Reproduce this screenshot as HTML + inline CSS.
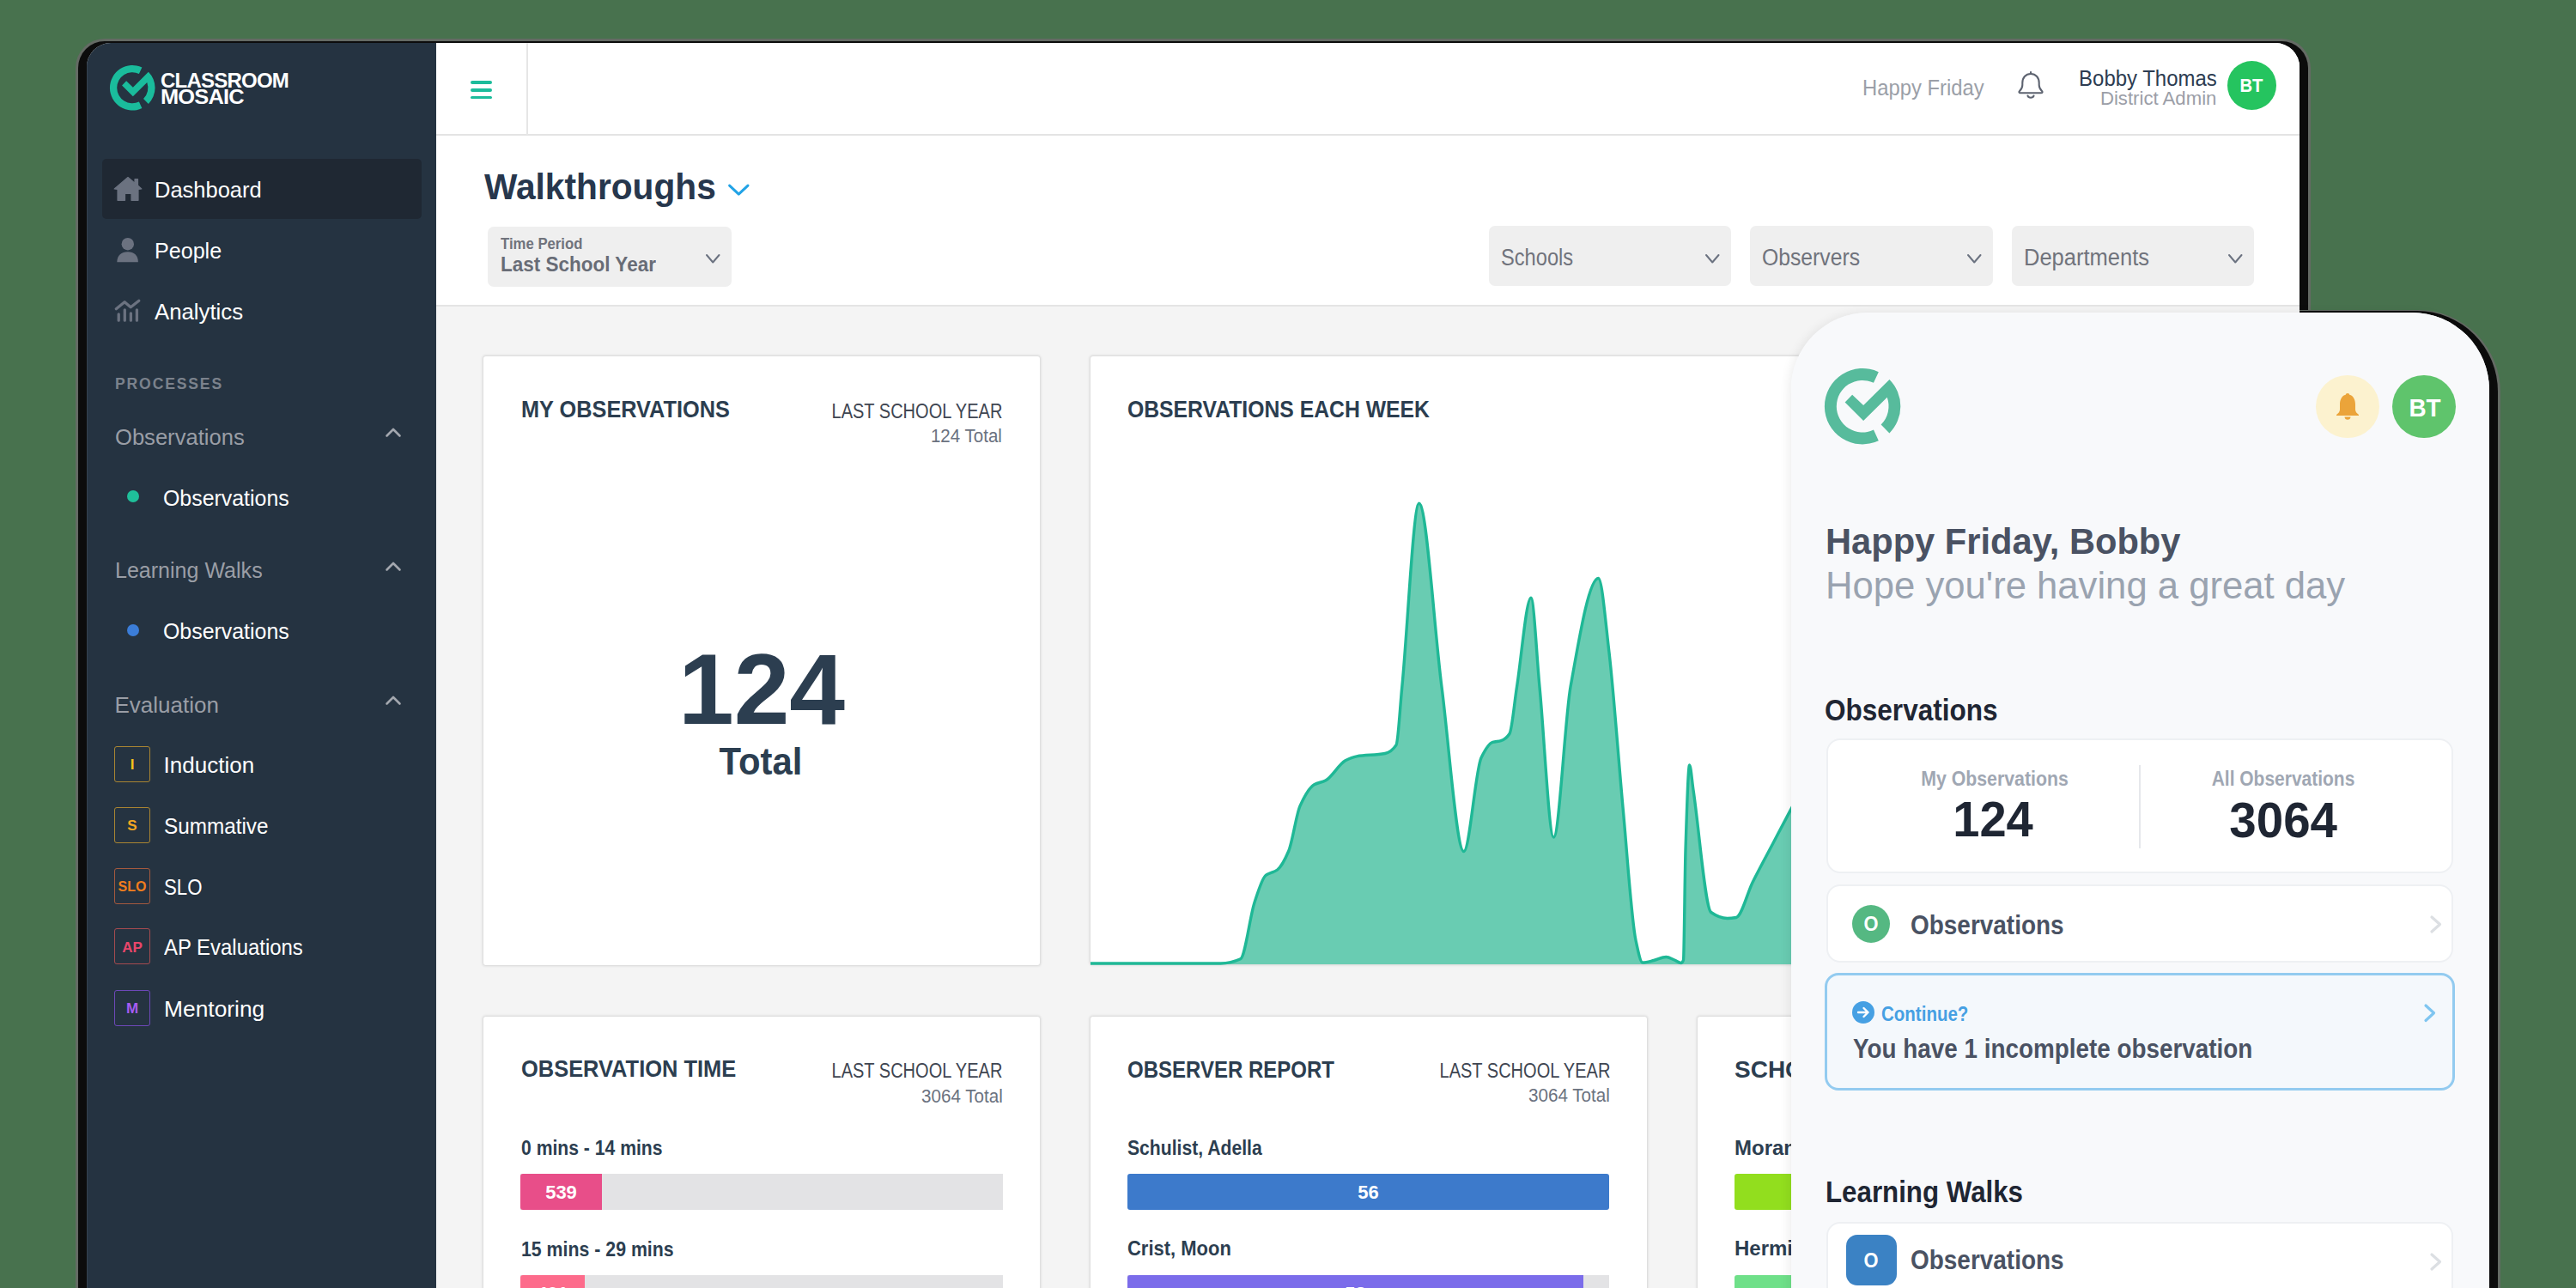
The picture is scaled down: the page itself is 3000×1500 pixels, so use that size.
<!DOCTYPE html>
<html><head><meta charset="utf-8"><style>
html,body{margin:0;padding:0;width:3000px;height:1500px;overflow:hidden;background:#48724e;}
body{position:relative;font-family:"Liberation Sans",sans-serif;}
body div{position:absolute;box-sizing:border-box;}
.t{white-space:nowrap;line-height:1;}
svg{position:absolute;overflow:visible;}
</style></head><body>
<div style="left:88px;top:45px;width:2603px;height:1500px;background:#646a64;border-radius:34px 34px 0 0;"></div>
<div style="left:91px;top:47.5px;width:2597px;height:1500px;background:#0c0c0c;border-radius:31px 31px 0 0;"></div>
<div style="left:2075px;top:360.5px;width:837px;height:1200px;background:#646a64;border-radius:96px 96px 0 0;"></div>
<div style="left:2075px;top:362px;width:833.5px;height:1200px;background:#0c0c0c;border-radius:94px 94px 0 0;"></div>
<div style="left:0;top:0;width:3000px;height:1500px;clip-path:inset(50px 322px 0px 101px round 28px 28px 0 0);background:#f4f4f4;">
<div style="left:101px;top:50px;width:407px;height:1450px;background:#253341;"></div>
<div style="left:101px;top:50px;width:1px;height:1450px;background:#35424f;"></div>
<div style="left:508px;top:50px;width:2170px;height:107px;background:#fff;"></div>
<div style="left:508px;top:156px;width:2170px;height:1.5px;background:#e4e4e4;"></div>
<div style="left:613px;top:50px;width:1.5px;height:107px;background:#e6e6e6;"></div>
<div style="left:508px;top:157.5px;width:2170px;height:198px;background:#fff;"></div>
<div style="left:508px;top:355px;width:2170px;height:1.5px;background:#e4e4e4;"></div>
<svg style="left:127.7px;top:76.2px" width="52.6" height="52.6" viewBox="-477 -477 954 954"><g fill="#1abc9c"><path d="M201,-432 A477,477 0 1 0 201,432 L138,296 A327,327 0 1 1 138,-296 Z"/><path d="M337,-337 A477,477 0 0 1 337,337 L231,231 A327,327 0 0 0 308,-112 L10,181 L-222,-52 L-130,-144 L10,-12 Z"/></g></svg>
<div id="t1" class="t" style="left:186.5px;top:81.6px;font-size:24.5px;font-weight:700;color:#ffffff;transform:scaleX(0.9801);transform-origin:left 0;letter-spacing:-0.8px;">CLASSROOM</div>
<div id="t2" class="t" style="left:186.5px;top:101.4px;font-size:24.5px;font-weight:700;color:#ffffff;transform:scaleX(1.0370);transform-origin:left 0;letter-spacing:-0.8px;">MOSAIC</div>
<div style="left:119px;top:184.6px;width:372px;height:70.8px;background:#1f2833;border-radius:5px;"></div>
<svg style="left:132px;top:205px" width="34" height="30" viewBox="0 0 34 30"><path fill="#6b7280" stroke="#6b7280" stroke-width="1.2" stroke-linejoin="round" d="M17,1.5 L25,8.2 L25,3.5 L28.5,3.5 L28.5,11 L32.8,15 L29,15.5 L29,28.3 L21,28.3 L21,20.5 L13.5,20.5 L13.5,28.3 L5,28.3 L5,15.5 L1.2,15 Z"/></svg>
<svg style="left:136px;top:276.5px" width="25" height="29" viewBox="0 0 25 29"><circle fill="#6b7280" cx="12.8" cy="7.2" r="7.2"/><path fill="#6b7280" d="M0.3,28.3 C0.3,20.5 5.5,16.3 12.8,16.3 C20,16.3 24.9,20.5 24.9,28.3 Z"/></svg>
<svg style="left:130px;top:345px" width="40" height="35" viewBox="130 345 40 35"><g fill="none" stroke="#6b7280" stroke-width="3.3" stroke-linecap="round" stroke-linejoin="round"><path d="M135.3,359.7 L145.1,351.8 L152.2,357.8 L161.8,350.3"/><path d="M138.2,365.8 V373.2 M145.3,360.8 V373.2 M152.4,364.8 V373.2 M159.4,360.8 V373.2"/></g></svg>
<div id="t3" class="t" style="left:179.7px;top:208.8px;font-size:25px;font-weight:400;color:#ffffff;transform:scaleX(1.0193);transform-origin:left 0;">Dashboard</div>
<div id="t4" class="t" style="left:179.7px;top:280.2px;font-size:25px;font-weight:400;color:#ffffff;transform:scaleX(1.0040);transform-origin:left 0;">People</div>
<div id="t5" class="t" style="left:179.7px;top:350.9px;font-size:25px;font-weight:400;color:#ffffff;transform:scaleX(1.0303);transform-origin:left 0;">Analytics</div>
<div id="t6" class="t" style="left:133.5px;top:436.8px;font-size:19px;font-weight:700;color:#7b828c;transform:scaleX(0.9248);transform-origin:left 0;letter-spacing:2px;">PROCESSES</div>
<div id="t7" class="t" style="left:133.5px;top:495.9px;font-size:26px;font-weight:400;color:#9a9ea6;transform:scaleX(0.9836);transform-origin:left 0;">Observations</div>
<svg style="left:449px;top:498px" width="18" height="11" viewBox="0 0 18 11"><path d="M1.5,9.5 L9,2 L16.5,9.5" fill="none" stroke="#a3a7ae" stroke-width="2.6" stroke-linecap="round" stroke-linejoin="round"/></svg>
<div style="left:147.5px;top:571.3px;width:14px;height:14px;border-radius:50%;background:#1fbf9a"></div>
<div id="t8" class="t" style="left:190px;top:566.5px;font-size:26px;font-weight:400;color:#ffffff;transform:scaleX(0.9579);transform-origin:left 0;">Observations</div>
<div id="t9" class="t" style="left:133.5px;top:651.0px;font-size:26px;font-weight:400;color:#9a9ea6;transform:scaleX(0.9631);transform-origin:left 0;">Learning Walks</div>
<svg style="left:449px;top:653.5px" width="18" height="11" viewBox="0 0 18 11"><path d="M1.5,9.5 L9,2 L16.5,9.5" fill="none" stroke="#a3a7ae" stroke-width="2.6" stroke-linecap="round" stroke-linejoin="round"/></svg>
<div style="left:147.5px;top:727px;width:14px;height:14px;border-radius:50%;background:#3b7dd8"></div>
<div id="t10" class="t" style="left:190px;top:721.5px;font-size:26px;font-weight:400;color:#ffffff;transform:scaleX(0.9579);transform-origin:left 0;">Observations</div>
<div id="t11" class="t" style="left:133.5px;top:808.1px;font-size:26px;font-weight:400;color:#9a9ea6;">Evaluation</div>
<svg style="left:449px;top:809.5px" width="18" height="11" viewBox="0 0 18 11"><path d="M1.5,9.5 L9,2 L16.5,9.5" fill="none" stroke="#a3a7ae" stroke-width="2.6" stroke-linecap="round" stroke-linejoin="round"/></svg>
<div style="left:133px;top:869px;width:42px;height:42px;border:1.6px solid #a98532;border-radius:3px;"></div>
<div id="t12" class="t" style="left:-846px;width:2000px;text-align:center;top:882.3px;font-size:17px;font-weight:700;color:#f3c21b;">I</div>
<div id="t13" class="t" style="left:190.6px;top:878.1px;font-size:26px;font-weight:400;color:#ffffff;">Induction</div>
<div style="left:133px;top:939.6px;width:42px;height:42px;border:1.6px solid #a98532;border-radius:3px;"></div>
<div id="t14" class="t" style="left:-846px;width:2000px;text-align:center;top:952.9px;font-size:17px;font-weight:700;color:#f5a623;">S</div>
<div id="t15" class="t" style="left:190.6px;top:948.9px;font-size:26px;font-weight:400;color:#ffffff;transform:scaleX(0.9344);transform-origin:left 0;">Summative</div>
<div style="left:133px;top:1010.7px;width:42px;height:42px;border:1.6px solid #a5593e;border-radius:3px;"></div>
<div id="t16" class="t" style="left:-846px;width:2000px;text-align:center;top:1024.5px;font-size:16px;font-weight:700;color:#f07d1e;">SLO</div>
<div id="t17" class="t" style="left:190.6px;top:1020.0px;font-size:26px;font-weight:400;color:#ffffff;transform:scaleX(0.8540);transform-origin:left 0;">SLO</div>
<div style="left:133px;top:1081.4px;width:42px;height:42px;border:1.6px solid #a54b4f;border-radius:3px;"></div>
<div id="t18" class="t" style="left:-846px;width:2000px;text-align:center;top:1094.7px;font-size:17px;font-weight:700;color:#e9466a;">AP</div>
<div id="t19" class="t" style="left:190.6px;top:1090.0px;font-size:26px;font-weight:400;color:#ffffff;transform:scaleX(0.9200);transform-origin:left 0;">AP Evaluations</div>
<div style="left:133px;top:1152.5px;width:42px;height:42px;border:1.6px solid #6d48b8;border-radius:3px;"></div>
<div id="t20" class="t" style="left:-846px;width:2000px;text-align:center;top:1165.8px;font-size:17px;font-weight:700;color:#a65cf2;">M</div>
<div id="t21" class="t" style="left:190.6px;top:1161.8px;font-size:26px;font-weight:400;color:#ffffff;transform:scaleX(1.0143);transform-origin:left 0;">Mentoring</div>
<div style="left:548px;top:94px;width:25px;height:3.8px;background:#1cbc9b;border-radius:2px;"></div>
<div style="left:548px;top:102.9px;width:25px;height:3.8px;background:#1cbc9b;border-radius:2px;"></div>
<div style="left:548px;top:111.7px;width:25px;height:3.8px;background:#1cbc9b;border-radius:2px;"></div>
<div id="t22" class="t" style="right:689.4px;top:89.5px;font-size:25px;font-weight:400;color:#9b9fa8;transform:scaleX(0.9524);transform-origin:right 0;">Happy Friday</div>
<svg style="left:2340px;top:75px" width="50" height="50" viewBox="2340 75 50 50"><g fill="none" stroke="#5d6370" stroke-width="2.1" stroke-linejoin="round" stroke-linecap="round"><path d="M2365,86 C2359,86 2355.3,90.5 2355.3,96.5 L2355.3,99 C2355.3,102 2354,104 2352,106 C2350.8,107.2 2351.5,108.3 2353,108.3 L2377,108.3 C2378.5,108.3 2379.2,107.2 2378,106 C2376,104 2374.7,102 2374.7,99 L2374.7,96.5 C2374.7,90.5 2371,86 2365,86 Z"/><path d="M2365,84 V86"/><path d="M2361.5,111.6 C2362.5,114.4 2367.5,114.4 2368.5,111.6"/></g></svg>
<div id="t23" class="t" style="right:418.1px;top:79.3px;font-size:25px;font-weight:400;color:#2d3c51;transform:scaleX(0.9576);transform-origin:right 0;">Bobby Thomas</div>
<div id="t24" class="t" style="right:418.1px;top:105.3px;font-size:21.5px;font-weight:400;color:#9b9ea7;transform:scaleX(1.0310);transform-origin:right 0;">District Admin</div>
<div style="left:2593.5px;top:71px;width:57px;height:57px;border-radius:50%;background:#25c45f"></div>
<div id="t25" class="t" style="left:1622.3000000000002px;width:2000px;text-align:center;top:89.1px;font-size:22.5px;font-weight:700;color:#ffffff;transform:scaleX(0.9);">BT</div>
<div id="t26" class="t" style="left:564px;top:196.2px;font-size:43px;font-weight:700;color:#27374d;transform:scaleX(0.9465);transform-origin:left 0;">Walkthroughs</div>
<svg style="left:840px;top:205px" width="40" height="30" viewBox="840 205 40 30"><path d="M849.6,216.1 L860.3,226.2 L871,216.1" fill="none" stroke="#22a3e6" stroke-width="3" stroke-linecap="round" stroke-linejoin="round"/></svg>
<div style="left:568.4px;top:263.6px;width:283.3px;height:70px;background:#efefef;border-radius:7px;"></div>
<div id="t27" class="t" style="left:583px;top:275.7px;font-size:17.5px;font-weight:700;color:#70737c;transform:scaleX(0.9556);transform-origin:left 0;">Time Period</div>
<div id="t28" class="t" style="left:583px;top:296.2px;font-size:24px;font-weight:700;color:#686c76;transform:scaleX(0.9375);transform-origin:left 0;">Last School Year</div>
<svg style="left:820.8px;top:294.5px" width="18.5" height="12.5" viewBox="-2 -2 18.5 12.5"><path d="M0,0 L7.25,8.5 L14.5,0" fill="none" stroke="#6b7280" stroke-width="2" stroke-linecap="round" stroke-linejoin="round"/></svg>
<div style="left:1733.8px;top:263.3px;width:282.60000000000014px;height:70px;background:#efefef;border-radius:7px;"></div>
<div id="t29" class="t" style="left:1747.7px;top:286.8px;font-size:27px;font-weight:400;color:#70737c;transform:scaleX(0.8755);transform-origin:left 0;">Schools</div>
<svg style="left:1985.2px;top:294.5px" width="18.5" height="12.5" viewBox="-2 -2 18.5 12.5"><path d="M0,0 L7.25,8.5 L14.5,0" fill="none" stroke="#6b7280" stroke-width="2" stroke-linecap="round" stroke-linejoin="round"/></svg>
<div style="left:2037.7px;top:263.3px;width:283.29999999999995px;height:70px;background:#efefef;border-radius:7px;"></div>
<div id="t30" class="t" style="left:2052px;top:286.8px;font-size:27px;font-weight:400;color:#70737c;transform:scaleX(0.9154);transform-origin:left 0;">Observers</div>
<svg style="left:2289.8px;top:294.5px" width="18.5" height="12.5" viewBox="-2 -2 18.5 12.5"><path d="M0,0 L7.25,8.5 L14.5,0" fill="none" stroke="#6b7280" stroke-width="2" stroke-linecap="round" stroke-linejoin="round"/></svg>
<div style="left:2342.5px;top:263.3px;width:282.5px;height:70px;background:#efefef;border-radius:7px;"></div>
<div id="t31" class="t" style="left:2356.8px;top:286.8px;font-size:27px;font-weight:400;color:#70737c;transform:scaleX(0.9447);transform-origin:left 0;">Departments</div>
<svg style="left:2593.8px;top:294.5px" width="18.5" height="12.5" viewBox="-2 -2 18.5 12.5"><path d="M0,0 L7.25,8.5 L14.5,0" fill="none" stroke="#6b7280" stroke-width="2" stroke-linecap="round" stroke-linejoin="round"/></svg>
<div style="left:563px;top:415px;width:648px;height:709px;background:#fff;border-radius:3px;box-shadow:0 0 3px 0.5px rgba(0,0,0,0.13);"></div>
<div style="left:1270px;top:415px;width:1355px;height:708px;background:#fff;border-radius:3px;box-shadow:0 0 3px 0.5px rgba(0,0,0,0.13);"></div>
<div style="left:563px;top:1184px;width:648px;height:400px;background:#fff;border-radius:3px;box-shadow:0 0 3px 0.5px rgba(0,0,0,0.13);"></div>
<div style="left:1270px;top:1183.5px;width:648px;height:400px;background:#fff;border-radius:3px;box-shadow:0 0 3px 0.5px rgba(0,0,0,0.13);"></div>
<div style="left:1977px;top:1183.5px;width:648px;height:400px;background:#fff;border-radius:3px;box-shadow:0 0 3px 0.5px rgba(0,0,0,0.13);"></div>
<div id="t32" class="t" style="left:606.6px;top:463.2px;font-size:28px;font-weight:700;color:#2c3e50;transform:scaleX(0.9041);transform-origin:left 0;">MY OBSERVATIONS</div>
<div id="t33" class="t" style="right:1832.8px;top:467.6px;font-size:23.5px;font-weight:400;color:#3f4652;transform:scaleX(0.8522);transform-origin:right 0;">LAST SCHOOL YEAR</div>
<div id="t34" class="t" style="right:1832.8px;top:498.3px;font-size:21.5px;font-weight:400;color:#6b7280;transform:scaleX(0.9553);transform-origin:right 0;">124 Total</div>
<div id="t35" class="t" style="left:-113px;width:2000px;text-align:center;top:744.4px;font-size:117px;font-weight:700;color:#2c3e50;transform:scaleX(0.9947);transform-origin:center 0;">124</div>
<div id="t36" class="t" style="left:-114px;width:2000px;text-align:center;top:864.2px;font-size:45px;font-weight:700;color:#2c3e50;transform:scaleX(0.9307);transform-origin:center 0;">Total</div>
<div id="t37" class="t" style="left:1312.7px;top:462.6px;font-size:28px;font-weight:700;color:#2c3e50;transform:scaleX(0.8836);transform-origin:left 0;">OBSERVATIONS EACH WEEK</div>
<svg style="left:0;top:0" width="3000" height="1500"><path d="M1270,1122 C1320.5,1122.0 1371.1,1122.0 1421.6,1122 C1429.3,1122.0 1437.0,1120.3 1444.7,1116.8 C1450.1,1114.4 1455.6,1067.3 1461,1051 C1465.3,1038.0 1469.7,1023.0 1474,1019.5 C1478.5,1015.9 1483.1,1016.4 1487.6,1013 C1492.0,1009.7 1496.4,1001.3 1500.8,991 C1505.2,980.7 1509.6,948.4 1514,938.6 C1519.5,926.4 1525.0,916.9 1530.5,913.8 C1534.9,911.3 1539.3,911.3 1543.7,909 C1551.4,905.1 1559.1,889.9 1566.8,885.8 C1571.2,883.5 1575.6,881.6 1580,880.8 C1591.0,878.9 1602.0,879.7 1613,877.5 C1617.3,876.6 1621.7,874.4 1626,867.7 C1628.3,864.2 1630.5,823.3 1632.8,800 C1639.4,732.1 1646.0,586.3 1652.6,586.3 C1661.4,586.3 1670.2,731.9 1679,800 C1687.6,866.6 1696.2,991.5 1704.8,991.5 C1711.5,991.5 1718.3,896.5 1725,882.5 C1729.5,873.2 1733.9,865.7 1738.4,864.4 C1741.6,863.4 1744.8,863.6 1748,862.7 C1751.3,861.7 1754.7,859.5 1758,854.5 C1760.8,850.3 1763.7,818.0 1766.5,800 C1772.0,765.0 1777.5,696.2 1783,696.2 C1786.3,696.2 1789.7,765.0 1793,800 C1798.5,857.5 1803.9,975.0 1809.4,975 C1815.9,975.0 1822.5,836.6 1829,800 C1839.8,739.3 1850.7,673.5 1861.5,673.5 C1865.7,673.5 1869.8,724.6 1874,760 C1879.3,805.3 1884.7,882.6 1890,940 C1895.0,993.8 1900.0,1071.5 1905,1095 C1907.7,1107.5 1910.3,1121.0 1913,1121 C1917.3,1121.0 1921.7,1119.5 1926,1118.5 C1930.8,1117.4 1935.5,1114.5 1940.3,1114.5 C1943.5,1114.5 1946.8,1116.7 1950,1118 C1952.7,1119.1 1955.3,1121.5 1958,1121.5 C1958.8,1121.5 1959.7,1120.3 1960.5,1118 C1961.3,1115.7 1962.2,1016.3 1963,990 C1964.5,941.6 1966.1,891.0 1967.6,891 C1969.1,891.0 1970.5,910.2 1972,920 C1978.9,966.2 1985.8,1057.7 1992.7,1062.5 C1999.0,1066.9 2005.3,1069.5 2011.6,1069.5 C2015.1,1069.5 2018.5,1069.1 2022,1068.5 C2028.3,1067.4 2034.7,1040.5 2041,1027.7 C2048.7,1012.2 2056.3,998.3 2064,983.7 C2071.0,970.4 2078.0,956.9 2085,943.9 C2096.7,922.2 2108.3,901.3 2120,880 L2120,1123 L1270,1123 Z" fill="#69ccb2"/><path d="M1270,1122 C1320.5,1122.0 1371.1,1122.0 1421.6,1122 C1429.3,1122.0 1437.0,1120.3 1444.7,1116.8 C1450.1,1114.4 1455.6,1067.3 1461,1051 C1465.3,1038.0 1469.7,1023.0 1474,1019.5 C1478.5,1015.9 1483.1,1016.4 1487.6,1013 C1492.0,1009.7 1496.4,1001.3 1500.8,991 C1505.2,980.7 1509.6,948.4 1514,938.6 C1519.5,926.4 1525.0,916.9 1530.5,913.8 C1534.9,911.3 1539.3,911.3 1543.7,909 C1551.4,905.1 1559.1,889.9 1566.8,885.8 C1571.2,883.5 1575.6,881.6 1580,880.8 C1591.0,878.9 1602.0,879.7 1613,877.5 C1617.3,876.6 1621.7,874.4 1626,867.7 C1628.3,864.2 1630.5,823.3 1632.8,800 C1639.4,732.1 1646.0,586.3 1652.6,586.3 C1661.4,586.3 1670.2,731.9 1679,800 C1687.6,866.6 1696.2,991.5 1704.8,991.5 C1711.5,991.5 1718.3,896.5 1725,882.5 C1729.5,873.2 1733.9,865.7 1738.4,864.4 C1741.6,863.4 1744.8,863.6 1748,862.7 C1751.3,861.7 1754.7,859.5 1758,854.5 C1760.8,850.3 1763.7,818.0 1766.5,800 C1772.0,765.0 1777.5,696.2 1783,696.2 C1786.3,696.2 1789.7,765.0 1793,800 C1798.5,857.5 1803.9,975.0 1809.4,975 C1815.9,975.0 1822.5,836.6 1829,800 C1839.8,739.3 1850.7,673.5 1861.5,673.5 C1865.7,673.5 1869.8,724.6 1874,760 C1879.3,805.3 1884.7,882.6 1890,940 C1895.0,993.8 1900.0,1071.5 1905,1095 C1907.7,1107.5 1910.3,1121.0 1913,1121 C1917.3,1121.0 1921.7,1119.5 1926,1118.5 C1930.8,1117.4 1935.5,1114.5 1940.3,1114.5 C1943.5,1114.5 1946.8,1116.7 1950,1118 C1952.7,1119.1 1955.3,1121.5 1958,1121.5 C1958.8,1121.5 1959.7,1120.3 1960.5,1118 C1961.3,1115.7 1962.2,1016.3 1963,990 C1964.5,941.6 1966.1,891.0 1967.6,891 C1969.1,891.0 1970.5,910.2 1972,920 C1978.9,966.2 1985.8,1057.7 1992.7,1062.5 C1999.0,1066.9 2005.3,1069.5 2011.6,1069.5 C2015.1,1069.5 2018.5,1069.1 2022,1068.5 C2028.3,1067.4 2034.7,1040.5 2041,1027.7 C2048.7,1012.2 2056.3,998.3 2064,983.7 C2071.0,970.4 2078.0,956.9 2085,943.9 C2096.7,922.2 2108.3,901.3 2120,880" fill="none" stroke="#1fb896" stroke-width="3.4"/></svg>
<div id="t38" class="t" style="left:606.6px;top:1230.8px;font-size:28px;font-weight:700;color:#2c3e50;transform:scaleX(0.9088);transform-origin:left 0;">OBSERVATION TIME</div>
<div id="t39" class="t" style="right:1832.8px;top:1236.0px;font-size:23.5px;font-weight:400;color:#3f4652;transform:scaleX(0.8522);transform-origin:right 0;">LAST SCHOOL YEAR</div>
<div id="t40" class="t" style="right:1831.8px;top:1266.8px;font-size:21.5px;font-weight:400;color:#6b7280;transform:scaleX(0.9588);transform-origin:right 0;">3064 Total</div>
<div id="t41" class="t" style="left:606.6px;top:1325.2px;font-size:24px;font-weight:700;color:#2c3e50;transform:scaleX(0.8811);transform-origin:left 0;">0 mins - 14 mins</div>
<div style="left:606px;top:1367.4px;width:562px;height:41.6px;background:#e3e3e5;"></div>
<div style="left:606px;top:1367.4px;width:95px;height:41.6px;background:#e84e89;border-radius:3px 0 0 3px;"></div>
<div id="t42" class="t" style="left:-346.5px;width:2000px;text-align:center;top:1377.9px;font-size:22px;font-weight:700;color:#ffffff;">539</div>
<div id="t43" class="t" style="left:606.6px;top:1443.2px;font-size:24px;font-weight:700;color:#2c3e50;transform:scaleX(0.8879);transform-origin:left 0;">15 mins - 29 mins</div>
<div style="left:606px;top:1485px;width:562px;height:41.6px;background:#e3e3e5;"></div>
<div style="left:606px;top:1485px;width:75px;height:41.6px;background:#fd6b8b;border-radius:3px 0 0 3px;"></div>
<div id="t44" class="t" style="left:-356.5px;width:2000px;text-align:center;top:1495.9px;font-size:22px;font-weight:700;color:#ffffff;">401</div>
<div id="t45" class="t" style="left:1312.7px;top:1231.8px;font-size:28px;font-weight:700;color:#2c3e50;transform:scaleX(0.8571);transform-origin:left 0;">OBSERVER REPORT</div>
<div id="t46" class="t" style="right:1125.1px;top:1236.2px;font-size:23.5px;font-weight:400;color:#3f4652;transform:scaleX(0.8522);transform-origin:right 0;">LAST SCHOOL YEAR</div>
<div id="t47" class="t" style="right:1124.8px;top:1266.0px;font-size:21.5px;font-weight:400;color:#6b7280;transform:scaleX(0.9588);transform-origin:right 0;">3064 Total</div>
<div id="t48" class="t" style="left:1313px;top:1325.2px;font-size:24px;font-weight:700;color:#2c3e50;transform:scaleX(0.8814);transform-origin:left 0;">Schulist, Adella</div>
<div style="left:1313px;top:1367px;width:561px;height:42px;background:#3d7acb;border-radius:3px;"></div>
<div id="t49" class="t" style="left:593.5px;width:2000px;text-align:center;top:1377.9px;font-size:22px;font-weight:700;color:#ffffff;">56</div>
<div id="t50" class="t" style="left:1313px;top:1442.2px;font-size:24px;font-weight:700;color:#2c3e50;transform:scaleX(0.9154);transform-origin:left 0;">Crist, Moon</div>
<div style="left:1313px;top:1485px;width:561px;height:42px;background:#e3e3e5;"></div>
<div style="left:1313px;top:1485px;width:531px;height:42px;background:#7b6cea;border-radius:3px 0 0 3px;"></div>
<div id="t51" class="t" style="left:578.5px;width:2000px;text-align:center;top:1495.9px;font-size:22px;font-weight:700;color:#ffffff;">53</div>
<div id="t52" class="t" style="left:2020px;top:1231.8px;font-size:28px;font-weight:700;color:#2c3e50;">SCHOOLS REPORT</div>
<div id="t53" class="t" style="left:2020px;top:1325.2px;font-size:24px;font-weight:700;color:#2c3e50;">Moran, Lee</div>
<div style="left:2020px;top:1366.5px;width:561px;height:42.5px;background:#92de1e;border-radius:3px;"></div>
<div id="t54" class="t" style="left:2020px;top:1442.2px;font-size:24px;font-weight:700;color:#2c3e50;">Hermiston</div>
<div style="left:2020px;top:1485px;width:561px;height:42px;background:#6fe089;border-radius:3px;"></div>
</div>
<div style="left:2085.5px;top:364px;width:813.5px;height:1200px;border-radius:90px 90px 0 0;box-shadow:-3px 0 12px rgba(0,0,0,0.07);background:#f8f9fb;"></div>
<div style="left:0;top:0;width:3000px;height:1500px;clip-path:inset(364px 101px 0px 2085.5px round 90px 90px 0 0);">
<div style="left:2085.5px;top:364px;width:813.5px;height:1200px;background:#f8f9fb;"></div>
<svg style="left:2124.6000000000004px;top:429.3px" width="88.4" height="88.4" viewBox="-477 -477 954 954"><g fill="#57bb9c"><path d="M201,-432 A477,477 0 1 0 201,432 L138,296 A327,327 0 1 1 138,-296 Z"/><path d="M337,-337 A477,477 0 0 1 337,337 L231,231 A327,327 0 0 0 308,-112 L10,181 L-222,-52 L-130,-144 L10,-12 Z"/></g></svg>
<div style="left:2697.2px;top:436.7px;width:73.6px;height:73.6px;border-radius:50%;background:#fcf2cf"></div>
<svg style="left:2720px;top:458px" width="28" height="31" viewBox="0 0 28 31"><g fill="#eba43a"><circle cx="14" cy="2.3" r="2.3"/><path d="M14,1.5 C7,1.5 5,8 5,13 L5,19 C5,21.5 3,23.5 1,25 L1,26 L27,26 L27,25 C25,23.5 23,21.5 23,19 L23,13 C23,8 21,1.5 14,1.5 Z"/><path d="M10.5,27.5 L17.5,27.5 C17.5,29.5 16,30.8 14,30.8 C12,30.8 10.5,29.5 10.5,27.5 Z"/></g></svg>
<div style="left:2786px;top:436.7px;width:73.6px;height:73.6px;border-radius:50%;background:#5fc46c"></div>
<div id="t55" class="t" style="left:1823.5px;width:2000px;text-align:center;top:459.9px;font-size:30px;font-weight:700;color:#ffffff;transform:scaleX(0.93);">BT</div>
<div id="t56" class="t" style="left:2126px;top:609.1px;font-size:43px;font-weight:700;color:#4a5263;transform:scaleX(0.9686);transform-origin:left 0;">Happy Friday, Bobby</div>
<div id="t57" class="t" style="left:2126px;top:660.2px;font-size:44px;font-weight:400;color:#9aa3b0;transform:scaleX(0.9918);transform-origin:left 0;">Hope you're having a great day</div>
<div id="t58" class="t" style="left:2124.5px;top:808.9px;font-size:35px;font-weight:700;color:#1f2633;transform:scaleX(0.9009);transform-origin:left 0;">Observations</div>
<div style="left:2127px;top:859.6px;width:730px;height:157.2px;background:#fff;border:2px solid #eef0f3;border-radius:16px;"></div>
<div style="left:2490.8px;top:890.6px;width:2.2px;height:97px;background:#e6e8eb;"></div>
<div id="t59" class="t" style="left:1323px;width:2000px;text-align:center;top:894.9px;font-size:24px;font-weight:700;color:#a0a7b3;transform:scaleX(0.8880);transform-origin:center 0;">My Observations</div>
<div id="t60" class="t" style="left:1321.1999999999998px;width:2000px;text-align:center;top:926.6px;font-size:56.5px;font-weight:700;color:#1f2633;transform:scaleX(0.9934);transform-origin:center 0;">124</div>
<div id="t61" class="t" style="left:1658.9px;width:2000px;text-align:center;top:894.9px;font-size:24px;font-weight:700;color:#a0a7b3;transform:scaleX(0.8737);transform-origin:center 0;">All Observations</div>
<div id="t62" class="t" style="left:1659.1999999999998px;width:2000px;text-align:center;top:927.6px;font-size:56.5px;font-weight:700;color:#1f2633;">3064</div>
<div style="left:2127px;top:1030.4px;width:730px;height:90.6px;background:#fff;border:2px solid #eef0f3;border-radius:16px;"></div>
<div style="left:2157.3px;top:1053.8px;width:44px;height:44px;border-radius:50%;background:#55b882"></div>
<div id="t63" class="t" style="left:1178.8000000000002px;width:2000px;text-align:center;top:1064.8px;font-size:23.5px;font-weight:700;color:#ffffff;transform:scaleX(0.93);">O</div>
<div id="t64" class="t" style="left:2224.7px;top:1061.8px;font-size:31px;font-weight:700;color:#4a5263;transform:scaleX(0.9015);transform-origin:left 0;">Observations</div>
<svg style="left:2830.2px;top:1065.5px" width="13.5" height="21" viewBox="-2 -2 13.5 21"><path d="M0,0 L9.5,8.5 L0,17" fill="none" stroke="#dcdfe3" stroke-width="3.2" stroke-linecap="round" stroke-linejoin="round"/></svg>
<div style="left:2125px;top:1132.5px;width:734px;height:137.5px;background:#f4f8fc;border:3px solid #93cbf0;border-radius:16px;"></div>
<svg style="left:2157.4px;top:1166px" width="26" height="26" viewBox="0 0 26 26"><circle cx="13" cy="13" r="13" fill="#46a0e3"/><path d="M7,13 H18.5 M13.5,8 L18.5,13 L13.5,18" fill="none" stroke="#fff" stroke-width="2.4" stroke-linecap="round" stroke-linejoin="round"/></svg>
<div id="t65" class="t" style="left:2190.5px;top:1168.6px;font-size:24px;font-weight:700;color:#46a0e3;transform:scaleX(0.8547);transform-origin:left 0;">Continue?</div>
<div id="t66" class="t" style="left:2158px;top:1205.7px;font-size:31px;font-weight:700;color:#4a5263;transform:scaleX(0.8983);transform-origin:left 0;">You have 1 incomplete observation</div>
<svg style="left:2822.5px;top:1168.5px" width="13.5" height="21.5" viewBox="-2 -2 13.5 21.5"><path d="M0,0 L9.5,8.75 L0,17.5" fill="none" stroke="#7fc5f0" stroke-width="3.2" stroke-linecap="round" stroke-linejoin="round"/></svg>
<div id="t67" class="t" style="left:2125.5px;top:1370.3px;font-size:35px;font-weight:700;color:#1f2633;transform:scaleX(0.8937);transform-origin:left 0;">Learning Walks</div>
<div style="left:2127px;top:1422.5px;width:730px;height:150px;background:#fff;border:2px solid #eef0f3;border-radius:16px;"></div>
<div style="left:2150px;top:1438px;width:59px;height:58.5px;background:#3b82c4;border-radius:13px;"></div>
<div id="t68" class="t" style="left:1178.6999999999998px;width:2000px;text-align:center;top:1456.6px;font-size:23.5px;font-weight:700;color:#ffffff;transform:scaleX(0.93);">O</div>
<div id="t69" class="t" style="left:2224.5px;top:1452.2px;font-size:31px;font-weight:700;color:#4a5263;transform:scaleX(0.9015);transform-origin:left 0;">Observations</div>
<svg style="left:2830.2px;top:1459px" width="13.5" height="21" viewBox="-2 -2 13.5 21"><path d="M0,0 L9.5,8.5 L0,17" fill="none" stroke="#dcdfe3" stroke-width="3.2" stroke-linecap="round" stroke-linejoin="round"/></svg>
</div>
</body></html>
